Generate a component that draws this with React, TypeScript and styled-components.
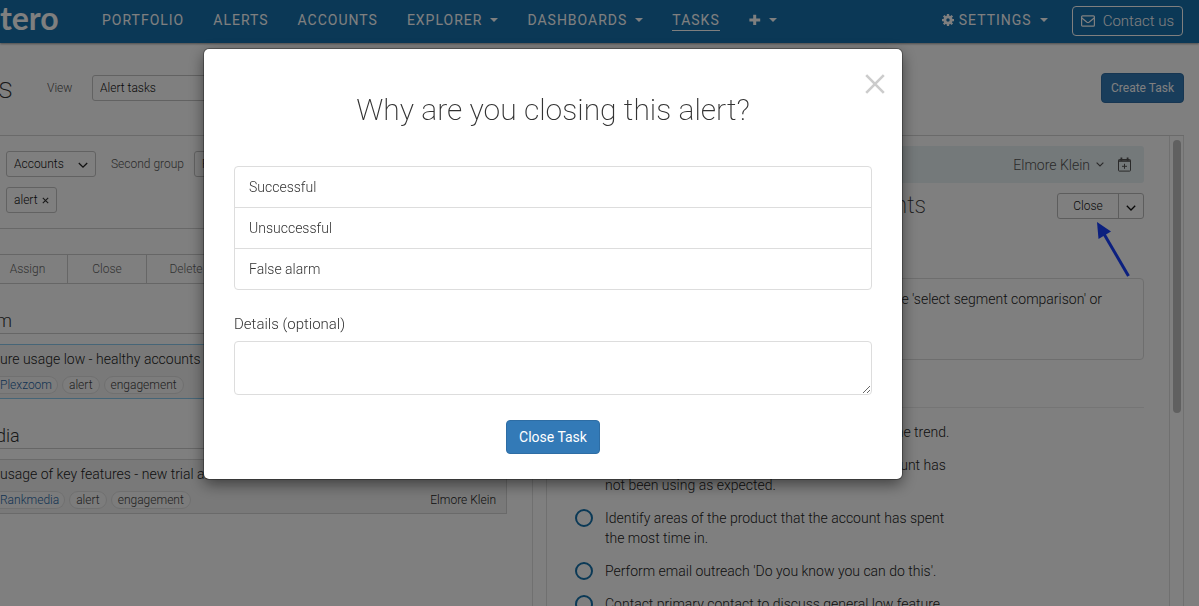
import React from "react";
import styled, { createGlobalStyle } from "styled-components";

const Global = createGlobalStyle`
  *, *::before, *::after { box-sizing: border-box; }
  html, body { margin: 0; padding: 0; }
  body {
    font-family: Roboto, "Liberation Sans", sans-serif;
    font-weight: 300;
    font-size: 14px;
    line-height: 20px;
    color: #333;
    background: #fff;
  }
  button, select, textarea { font: inherit; color: inherit; margin: 0; }
`;

const Page = styled.div`
  height: 100vh;
  display: flex;
  flex-direction: column;
  overflow: hidden;
`;

/* ---------- top bar ---------- */

const NavBar = styled.header`
  flex: none;
  height: 43px;
  display: flex;
  align-items: center;
  padding: 0 16px 2px 0;
  background: #1670ad;
  color: #fff;
  box-shadow: 0 1px 2px rgba(0, 0, 0, 0.4);
`;

const Logo = styled.a`
  width: 102px;
  padding-bottom: 6px;
  font-family: Lato, sans-serif;
  font-weight: 700;
  font-size: 32px;
  line-height: 32px;
  color: #fff;
  text-decoration: none;
`;

const NavLinks = styled.nav`
  flex: 1;
  display: flex;
  align-items: center;
  gap: 29px;
`;

const NavLink = styled.a<{ $active?: boolean }>`
  display: inline-flex;
  align-items: center;
  height: 21px;
  font-weight: 400;
  font-size: 14px;
  letter-spacing: 1px;
  color: #fff;
  text-decoration: none;
  border-bottom: 1px solid ${(p) => (p.$active ? "#fff" : "transparent")};
`;

const Caret = styled.span`
  margin-left: 8px;
  border: 4px solid transparent;
  border-top-color: #fff;
  border-bottom: 0;
`;

const NavIcon = styled.svg`
  display: block;
  margin-right: 5px;
`;

const ContactButton = styled.button`
  display: flex;
  align-items: center;
  gap: 8px;
  height: 30px;
  margin-left: 24px;
  padding: 0 8px;
  border: 1px solid #fff;
  border-radius: 4px;
  background: transparent;
  color: #fff;
  font-size: 15px;
`;

/* ---------- shared controls ---------- */

const PrimaryButton = styled.button<{ $small?: boolean }>`
  height: ${(p) => (p.$small ? 30 : 34)}px;
  padding: 0 ${(p) => (p.$small ? 9 : 12)}px;
  border: 1px solid #2e6da4;
  border-radius: 4px;
  background: #337ab7;
  color: #fff;
  font-weight: 400;
  font-size: ${(p) => (p.$small ? 12 : 14)}px;
`;

const SelectWrap = styled.span<{ $width: number }>`
  position: relative;
  display: inline-block;
  width: ${(p) => p.$width}px;
  height: 26px;
`;

const SelectBox = styled.select`
  appearance: none;
  width: 100%;
  height: 26px;
  padding: 0 7px;
  border: 1px solid #c4c4c4;
  border-radius: 3px;
  background: transparent;
  font-size: 12px;
  color: #111;
`;

const SelectArrow = styled.svg`
  position: absolute;
  right: 8px;
  top: 11px;
  pointer-events: none;
`;

const FieldLabel = styled.label`
  font-size: 12px;
  color: #555;
`;

/* ---------- page heading ---------- */

const TitleBar = styled.div`
  flex: none;
  display: flex;
  align-items: center;
  height: 92px;
  padding: 0 15px 3px 0;
`;

const PageTitle = styled.h1`
  width: 49px;
  margin: 0 0 0 -2px;
  font-weight: 200;
  font-size: 30px;
  line-height: 36px;
`;

const ViewLabel = styled(FieldLabel)`
  width: 45px;
`;

const Spacer = styled.span`
  flex: 1;
`;

const Columns = styled.div`
  flex: 1;
  min-height: 0;
  display: flex;
  margin-right: 15px;
  border-top: 1px solid #d5d5d5;
`;

const Gutter = styled.div`
  flex: none;
  width: 15px;
  padding: 4px 2px 0 3px;
  border: solid #e0e0e0;
  border-width: 0 1px;
`;

const ScrollThumb = styled.div`
  width: 8px;
  height: 273px;
  border-radius: 4px;
  background: #c1c1c1;
`;

/* ---------- task list ---------- */

const ListPane = styled.section`
  flex: 0 0 532px;
  overflow: hidden;
`;

const Filters = styled.div`
  display: flex;
  flex-direction: column;
  gap: 10px;
  height: 93px;
  padding: 15px 0 0 6px;
  border-bottom: 1px solid #d0d0d0;
`;

const FilterRow = styled.div`
  display: flex;
  align-items: center;
`;

const GroupLabel = styled(FieldLabel)`
  margin: 0 10px 0 15px;
`;

const FilterChip = styled.button`
  display: flex;
  align-items: center;
  gap: 4px;
  height: 26px;
  padding: 0 7px;
  border: 1px solid #c4c4c4;
  border-radius: 3px;
  background: transparent;
  font-size: 12px;
  color: #111;
`;

const BulkActions = styled.div`
  display: flex;
  height: 30px;
  margin: 25px 25px 0 0;
  border: solid #ccc;
  border-width: 1px 0;
`;

const BulkButton = styled.button`
  width: 79px;
  padding: 0;
  border: 0;
  border-right: 1px solid #ccc;
  background: transparent;
  font-size: 12px;
  color: #666;

  &:first-child {
    width: 68px;
    padding-right: 12px;
  }
`;

const AccountGroup = styled.section`
  margin-right: 25px;
  padding-top: 25px;
`;

const AccountName = styled.h2`
  margin: 0 0 10px;
  height: 25px;
  border-bottom: 1px solid #ccc;
  font-weight: 300;
  font-size: 18px;
  line-height: 24px;
  text-indent: -4px;
`;

const TaskCard = styled.article<{ $selected?: boolean }>`
  height: 55px;
  padding-top: 4px;
  border: 1px solid ${(p) => (p.$selected ? "#8ccbee" : "#d5d5d5")};
  border-left: 0;
  background: #f3f3f3;
`;

const TaskTitle = styled.h3`
  margin: 0 0 7px;
  font-weight: 300;
  font-size: 14px;
  line-height: 20px;
  color: #222;
`;

const TaskMeta = styled.div`
  display: flex;
  align-items: center;
  gap: 4px;
  padding-right: 10px;
  font-size: 12px;
  line-height: 16px;
  color: #222;
`;

const Tag = styled.span`
  height: 18px;
  padding: 0 6px;
  border: 1px solid #e0e0e0;
  border-radius: 9px;
  background: #f8f8f8;
  color: #444;
`;

const AccountTag = styled.a`
  height: 18px;
  padding-right: 5px;
  border: 1px solid #e0e0e0;
  border-left: 0;
  border-radius: 0 9px 9px 0;
  background: #f8f8f8;
  color: #1f66a6;
  text-decoration: none;
`;

const Assignee = styled.span`
  margin-left: auto;
`;

/* ---------- task detail ---------- */

const DetailPane = styled.section`
  flex: 1;
  min-width: 0;
  padding: 10px 25px 0 16px;
  overflow: hidden;
  color: #222;
`;

const OwnerBar = styled.div`
  display: flex;
  align-items: center;
  justify-content: flex-end;
  height: 37px;
  padding-right: 12px;
  border-radius: 3px;
  background: #e9f2f4;
  color: #555;
`;

const OwnerButton = styled.button`
  display: flex;
  align-items: center;
  gap: 6px;
  margin-right: 14px;
  padding: 0;
  border: 0;
  background: transparent;
`;

const DetailHeader = styled.div`
  display: flex;
  align-items: flex-start;
  justify-content: space-between;
  height: 95px;
  padding-top: 10px;
`;

const DetailTitle = styled.h2`
  margin: 0;
  font-weight: 200;
  font-size: 23px;
  line-height: 26px;
  color: #333;
`;

const SplitButton = styled.div`
  position: relative;
  display: flex;
  height: 26px;
  border: 1px solid #bbb;
  border-radius: 3px;
  font-size: 12px;
  color: #111;
`;

const SplitMain = styled.button`
  width: 61px;
  padding: 0;
  border: 0;
  border-right: 1px solid #bbb;
  background: transparent;
`;

const SplitToggle = styled.button`
  display: flex;
  align-items: center;
  justify-content: center;
  width: 24px;
  padding: 3px 0 0;
  border: 0;
  background: transparent;
`;

const PointerArrow = styled.svg`
  position: absolute;
  left: 36px;
  top: 26px;
`;

const Description = styled.p`
  height: 82px;
  margin: 0 0 47px;
  padding: 10px 41px;
  border: 1px solid #ddd;
  border-radius: 4px;
  text-align: right;
  font-size: 14px;
`;

const Steps = styled.ul`
  display: flex;
  flex-direction: column;
  gap: 13px;
  margin: 0;
  padding: 14px 0 0 12px;
  border-top: 1px solid #eaeaea;
  list-style: none;
`;

const Step = styled.label`
  display: flex;
  align-items: flex-start;
  gap: 12px;
`;

const StepCheck = styled.input`
  appearance: none;
  flex: none;
  width: 18px;
  height: 18px;
  margin: 1px 0 0;
  border: 2px solid #1673ad;
  border-radius: 50%;
`;

const StepText = styled.span`
  max-width: 350px;
`;

/* ---------- modal ---------- */

const Backdrop = styled.div`
  position: fixed;
  inset: 0;
  display: flex;
  justify-content: center;
  align-items: flex-start;
  padding: 49px 93px 0 0;
  background: rgba(0, 0, 0, 0.5);
`;

const Dialog = styled.form`
  position: relative;
  display: flex;
  flex-direction: column;
  width: 698px;
  padding: 43px 30px 25px;
  border-radius: 5px;
  background: #fff;
  box-shadow: 0 0 0 1px rgba(0, 0, 0, 0.3), 0 5px 15px rgba(0, 0, 0, 0.5);
`;

const DismissButton = styled.button`
  position: absolute;
  top: 25px;
  right: 17px;
  width: 20px;
  height: 20px;
  padding: 0;
  border: 0;
  background: transparent;
`;

const DialogTitle = styled.h2`
  margin: 0 0 38px;
  text-align: center;
  font-weight: 200;
  font-size: 30px;
  line-height: 36px;
`;

const Reasons = styled.div`
  display: flex;
  flex-direction: column;
  border: 1px solid #ddd;
  border-radius: 4px;
`;

const Reason = styled.button`
  height: 41px;
  padding: 0 14px;
  border: 0;
  background: transparent;
  text-align: left;

  & + & {
    border-top: 1px solid #ddd;
  }

  &:first-child {
    height: 40px;
  }
`;

const DetailsLabel = styled.label`
  margin: 24px 0 7px;
  font-size: 15px;
`;

const DetailsInput = styled.textarea`
  height: 54px;
  padding: 6px 12px;
  border: 1px solid #ddd;
  border-radius: 4px;
  background: #fff;
  resize: vertical;
`;

const DialogFooter = styled.div`
  display: flex;
  justify-content: center;
  padding-top: 25px;
`;

const Chevron = ({ size = 10, width = 1.3 }: { size?: number; width?: number }) => (
  <svg width={size} height={(size * 6) / 10} viewBox="0 0 10 6" fill="none" stroke="currentColor" strokeWidth={width}>
    <path d="M0.8 0.8 5 5 9.2 0.8" />
  </svg>
);

const Select = ({ id, value, width }: { id: string; value: string; width: number }) => (
  <SelectWrap $width={width}>
    <SelectBox id={id} defaultValue={value}>
      <option>{value}</option>
    </SelectBox>
    <SelectArrow width="10" height="7" viewBox="0 0 10 7" fill="none" stroke="#222" strokeWidth="1.3">
      <path d="M0.8 1 5 5.2 9.2 1" />
    </SelectArrow>
  </SelectWrap>
);

const steps = [
  "Review the usage of key features and look into the trend.",
  "Identify the features of the product that the account has not been using as expected.",
  "Identify areas of the product that the account has spent the most time in.",
  "Perform email outreach 'Do you know you can do this'.",
  "Contact primary contact to discuss general low feature usage.",
];

const groups = [
  { name: "m", title: "ure usage low - healthy accounts", account: "Plexzoom", selected: true },
  { name: "dia", title: "usage of key features - new trial accounts", account: "Rankmedia", selected: false },
];

export default function App() {
  return (
    <>
      <Global />
      <Page>
        <NavBar>
          <Logo href="#">tero</Logo>
          <NavLinks>
            <NavLink href="#">PORTFOLIO</NavLink>
            <NavLink href="#">ALERTS</NavLink>
            <NavLink href="#">ACCOUNTS</NavLink>
            <NavLink href="#">EXPLORER<Caret /></NavLink>
            <NavLink href="#">DASHBOARDS<Caret /></NavLink>
            <NavLink href="#" $active>TASKS</NavLink>
            <NavLink href="#" aria-label="Add">
              <svg width="12" height="12" viewBox="0 0 12 12" fill="#fff">
                <path d="M4.2 0.8h3v3.6h4v3h-4V11h-3V7.4H0.4v-3h3.8z" />
              </svg>
              <Caret />
            </NavLink>
          </NavLinks>
          <NavLink href="#">
            <NavIcon width="12" height="12" viewBox="0 0 16 16" fill="none" stroke="#fff">
              <circle cx="8" cy="8" r="4.2" strokeWidth="3.8" />
              <path
                d="M8 0v3M8 13v3M0 8h3M13 8h3M2.3 2.3l2.2 2.2M11.5 11.5l2.2 2.2M2.3 13.7l2.2-2.2M11.5 4.5l2.2-2.2"
                strokeWidth="3"
              />
            </NavIcon>
            SETTINGS<Caret />
          </NavLink>
          <ContactButton type="button">
            <svg width="14" height="12" viewBox="0 0 14 12" fill="none" stroke="#fff" strokeWidth="1.2">
              <rect x="0.6" y="0.8" width="12.8" height="10.4" rx="1" />
              <path d="M0.8 3 6 7.2q1 .7 2 0L13.2 3" />
            </svg>
            Contact us
          </ContactButton>
        </NavBar>

        <TitleBar>
          <PageTitle>s</PageTitle>
          <ViewLabel htmlFor="view">View</ViewLabel>
          <Select id="view" value="Alert tasks" width={180} />
          <Spacer />
          <PrimaryButton type="button" $small>Create Task</PrimaryButton>
        </TitleBar>

        <Columns>
          <ListPane>
            <Filters>
              <FilterRow>
                <Select id="first-group" value="Accounts" width={90} />
                <GroupLabel htmlFor="second-group">Second group</GroupLabel>
                <Select id="second-group" value="Priority" width={90} />
              </FilterRow>
              <FilterRow>
                <FilterChip type="button">
                  alert
                  <svg width="7" height="7" viewBox="0 0 7 7" stroke="#333" strokeWidth="1.1">
                    <path d="M0.8 0.8 6.2 6.2M6.2 0.8 0.8 6.2" />
                  </svg>
                </FilterChip>
              </FilterRow>
            </Filters>
            <BulkActions>
              <BulkButton type="button">Assign</BulkButton>
              <BulkButton type="button">Close</BulkButton>
              <BulkButton type="button">Delete</BulkButton>
            </BulkActions>
            {groups.map((g) => (
              <AccountGroup key={g.name}>
                <AccountName>{g.name}</AccountName>
                <TaskCard $selected={g.selected}>
                  <TaskTitle>{g.title}</TaskTitle>
                  <TaskMeta>
                    <AccountTag href="#">{g.account}</AccountTag>
                    <Tag>alert</Tag>
                    <Tag>engagement</Tag>
                    <Assignee>Elmore Klein</Assignee>
                  </TaskMeta>
                </TaskCard>
              </AccountGroup>
            ))}
          </ListPane>
          <Gutter />

          <DetailPane>
            <OwnerBar>
              <OwnerButton type="button">
                Elmore Klein
                <Chevron size={8} width={1.4} />
              </OwnerButton>
              <svg width="14" height="15" viewBox="0 0 14 15" fill="none" stroke="#555" strokeWidth="1">
                <rect x="0.5" y="2.5" width="12" height="11.6" rx="0.8" />
                <path d="M0.5 4h12" strokeWidth="1.6" />
                <path d="M3.4 0.4v3.4M9.6 0.4v3.4" strokeWidth="1.8" />
                <path d="M6.5 6.8v5M4 9.3h5" />
              </svg>
            </OwnerBar>
            <DetailHeader>
              <DetailTitle>Feature usage low: healthy accounts</DetailTitle>
              <SplitButton>
                <SplitMain type="button">Close</SplitMain>
                <SplitToggle type="button" aria-label="More close options">
                  <Chevron />
                </SplitToggle>
                <PointerArrow width="40" height="60" viewBox="0 0 40 60">
                  <path d="M10 14 34.5 56" stroke="#1840ff" strokeWidth="3" fill="none" />
                  <path d="M3 2 17 11.5 4.5 19z" fill="#1840ff" />
                </PointerArrow>
              </SplitButton>
            </DetailHeader>
            <Description>
              Review the feature usage in the 'select segment comparison' or
            </Description>
            <Steps>
              {steps.map((s) => (
                <li key={s}>
                  <Step>
                    <StepCheck type="checkbox" />
                    <StepText>{s}</StepText>
                  </Step>
                </li>
              ))}
            </Steps>
          </DetailPane>
          <Gutter>
            <ScrollThumb />
          </Gutter>
        </Columns>
      </Page>

      <Backdrop>
        <Dialog role="dialog" aria-labelledby="dialog-title" onSubmit={(e) => e.preventDefault()}>
          <DismissButton type="button" aria-label="Dismiss">
            <svg width="20" height="20" viewBox="0 0 20 20" stroke="#ccc" strokeWidth="2.6">
              <path d="M1.2 1.2 18.8 18.8M18.8 1.2 1.2 18.8" />
            </svg>
          </DismissButton>
          <DialogTitle id="dialog-title">Why are you closing this alert?</DialogTitle>
          <Reasons>
            <Reason type="button">Successful</Reason>
            <Reason type="button">Unsuccessful</Reason>
            <Reason type="button">False alarm</Reason>
          </Reasons>
          <DetailsLabel htmlFor="details">Details (optional)</DetailsLabel>
          <DetailsInput id="details" />
          <DialogFooter>
            <PrimaryButton type="submit">Close Task</PrimaryButton>
          </DialogFooter>
        </Dialog>
      </Backdrop>
    </>
  );
}
